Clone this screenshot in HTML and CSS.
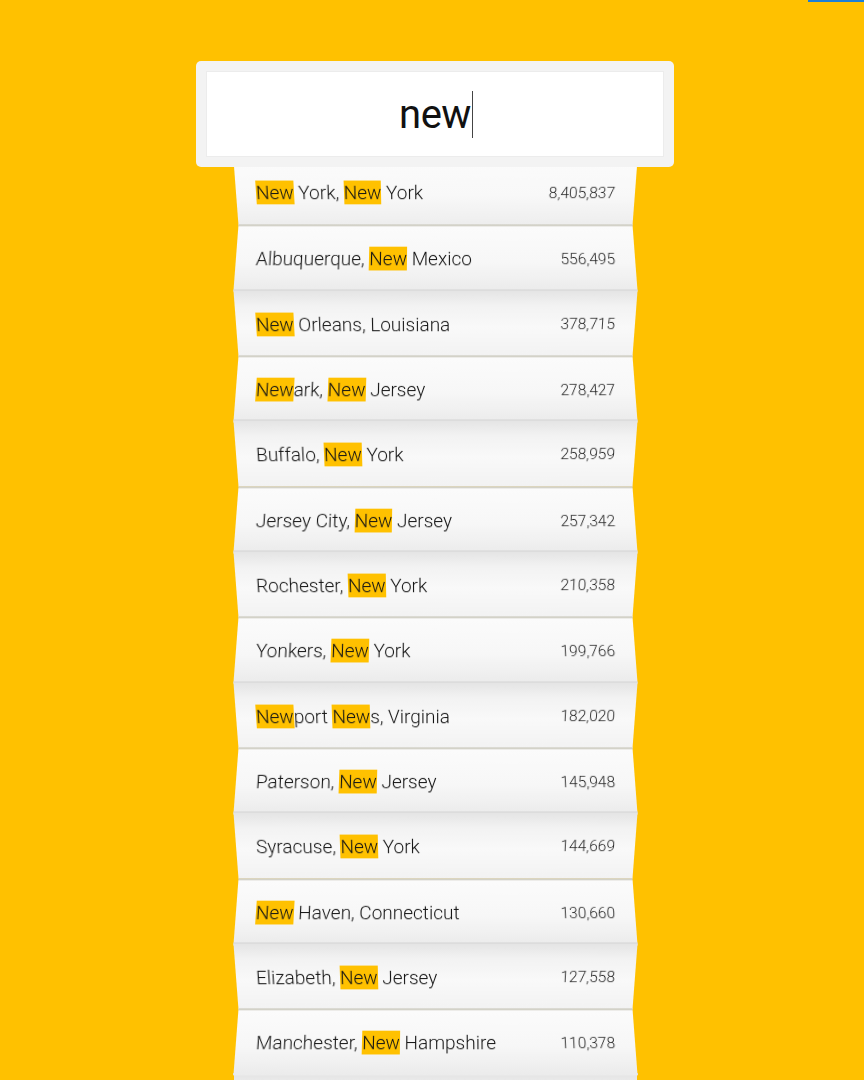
FILE: index.html
```html
<!DOCTYPE html>
<html lang="en">
<head>
<meta charset="utf-8">
<title>Folded city search</title>
<link rel="stylesheet" href="styles.css">
</head>
<body>
<div class="topbar"></div>
<main class="stage">
  <div class="search">
    <div class="search-field"><span class="query">new</span><span class="caret"></span></div>
  </div>
  <ul class="results">
    <li class="row"><span class="name"><mark>New</mark> York, <mark>New</mark> York</span><span class="pop">8,405,837</span></li>
    <li class="row"><span class="name">Albuquerque, <mark>New</mark> Mexico</span><span class="pop">556,495</span></li>
    <li class="row"><span class="name"><mark>New</mark> Orleans, Louisiana</span><span class="pop">378,715</span></li>
    <li class="row"><span class="name"><mark>New</mark>ark, <mark>New</mark> Jersey</span><span class="pop">278,427</span></li>
    <li class="row"><span class="name">Buffalo, <mark>New</mark> York</span><span class="pop">258,959</span></li>
    <li class="row"><span class="name">Jersey City, <mark>New</mark> Jersey</span><span class="pop">257,342</span></li>
    <li class="row"><span class="name">Rochester, <mark>New</mark> York</span><span class="pop">210,358</span></li>
    <li class="row"><span class="name">Yonkers, <mark>New</mark> York</span><span class="pop">199,766</span></li>
    <li class="row"><span class="name"><mark>New</mark>port <mark>New</mark>s, Virginia</span><span class="pop">182,020</span></li>
    <li class="row"><span class="name">Paterson, <mark>New</mark> Jersey</span><span class="pop">145,948</span></li>
    <li class="row"><span class="name">Syracuse, <mark>New</mark> York</span><span class="pop">144,669</span></li>
    <li class="row"><span class="name"><mark>New</mark> Haven, Connecticut</span><span class="pop">130,660</span></li>
    <li class="row"><span class="name">Elizabeth, <mark>New</mark> Jersey</span><span class="pop">127,558</span></li>
    <li class="row"><span class="name">Manchester, <mark>New</mark> Hampshire</span><span class="pop">110,378</span></li>
  </ul>
  <div class="row row-tail"></div>
</main>
</body>
</html>
```

FILE: styles.css
```css
html, body {
  margin: 0;
  padding: 0;
  background: #ffc100;
  overflow: hidden;
  height: 1080px;
}

body {
  font-family: "Helvetica Neue", Roboto, "Liberation Sans", sans-serif;
  font-weight: 300;
  color: #141414;
}

.topbar {
  position: absolute;
  top: 0;
  right: 0;
  width: 56px;
  height: 2px;
  background: #1c7ed6;
}

.stage {
  display: flex;
  flex-direction: column;
  align-items: center;
  padding-left: 6px;
  padding-top: 61px;
}

.search {
  position: relative;
  z-index: 5;
  width: 478px;
  height: 106px;
  box-sizing: border-box;
  padding: 10px;
  background: #f3f3f3;
  border-radius: 5px;
}

.search-field {
  height: 100%;
  box-sizing: border-box;
  background: #fff;
  border: 1px solid #ececec;
  display: flex;
  align-items: center;
  justify-content: center;
  padding-left: 2px;
}

.query {
  font-size: 40px;
  color: #111;
  font-weight: 400;
  letter-spacing: -0.5px;
}

.caret {
  display: inline-block;
  width: 1px;
  height: 47px;
  margin-left: 1px;
  background: #444;
}

.results {
  list-style: none;
  margin: -7px 0 0;
  padding: 0;
  width: 399px;
  display: flex;
  flex-direction: column;
  position: relative;
  z-index: 1;
}

.row {
  width: 399px;
  height: 65.33px;
  flex: none;
  box-sizing: border-box;
  padding: 0 20px;
  display: flex;
  align-items: center;
  justify-content: space-between;
}

.row:nth-child(odd) {
  transform: perspective(600px) rotateX(-12.9deg) scaleY(1.06);
  background: linear-gradient(to bottom, #e4e4e4 0%, #f2f2f2 22%, #f9f9f9 55%, #f2f2f2 100%);
  border-top: 1px solid #d4d4d4;
}

.row:first-child {
  background: linear-gradient(to bottom, #fbfbfb 0%, #f8f8f8 55%, #ededed 100%);
  border-top: none;
}

.row:nth-child(even),
.row-tail {
  transform: perspective(600px) rotateX(12.9deg) scaleY(1.06);
  background: linear-gradient(to bottom, #fbfbfb 0%, #f7f7f7 55%, #ebebeb 100%);
  border-top: 2px solid #d3d2c8;
}

.name {
  font-size: 19px;
  white-space: nowrap;
}

.pop {
  font-size: 15.5px;
  color: #1f1f1f;
}

mark {
  background: #ffc100;
  color: #141414;
}
```
